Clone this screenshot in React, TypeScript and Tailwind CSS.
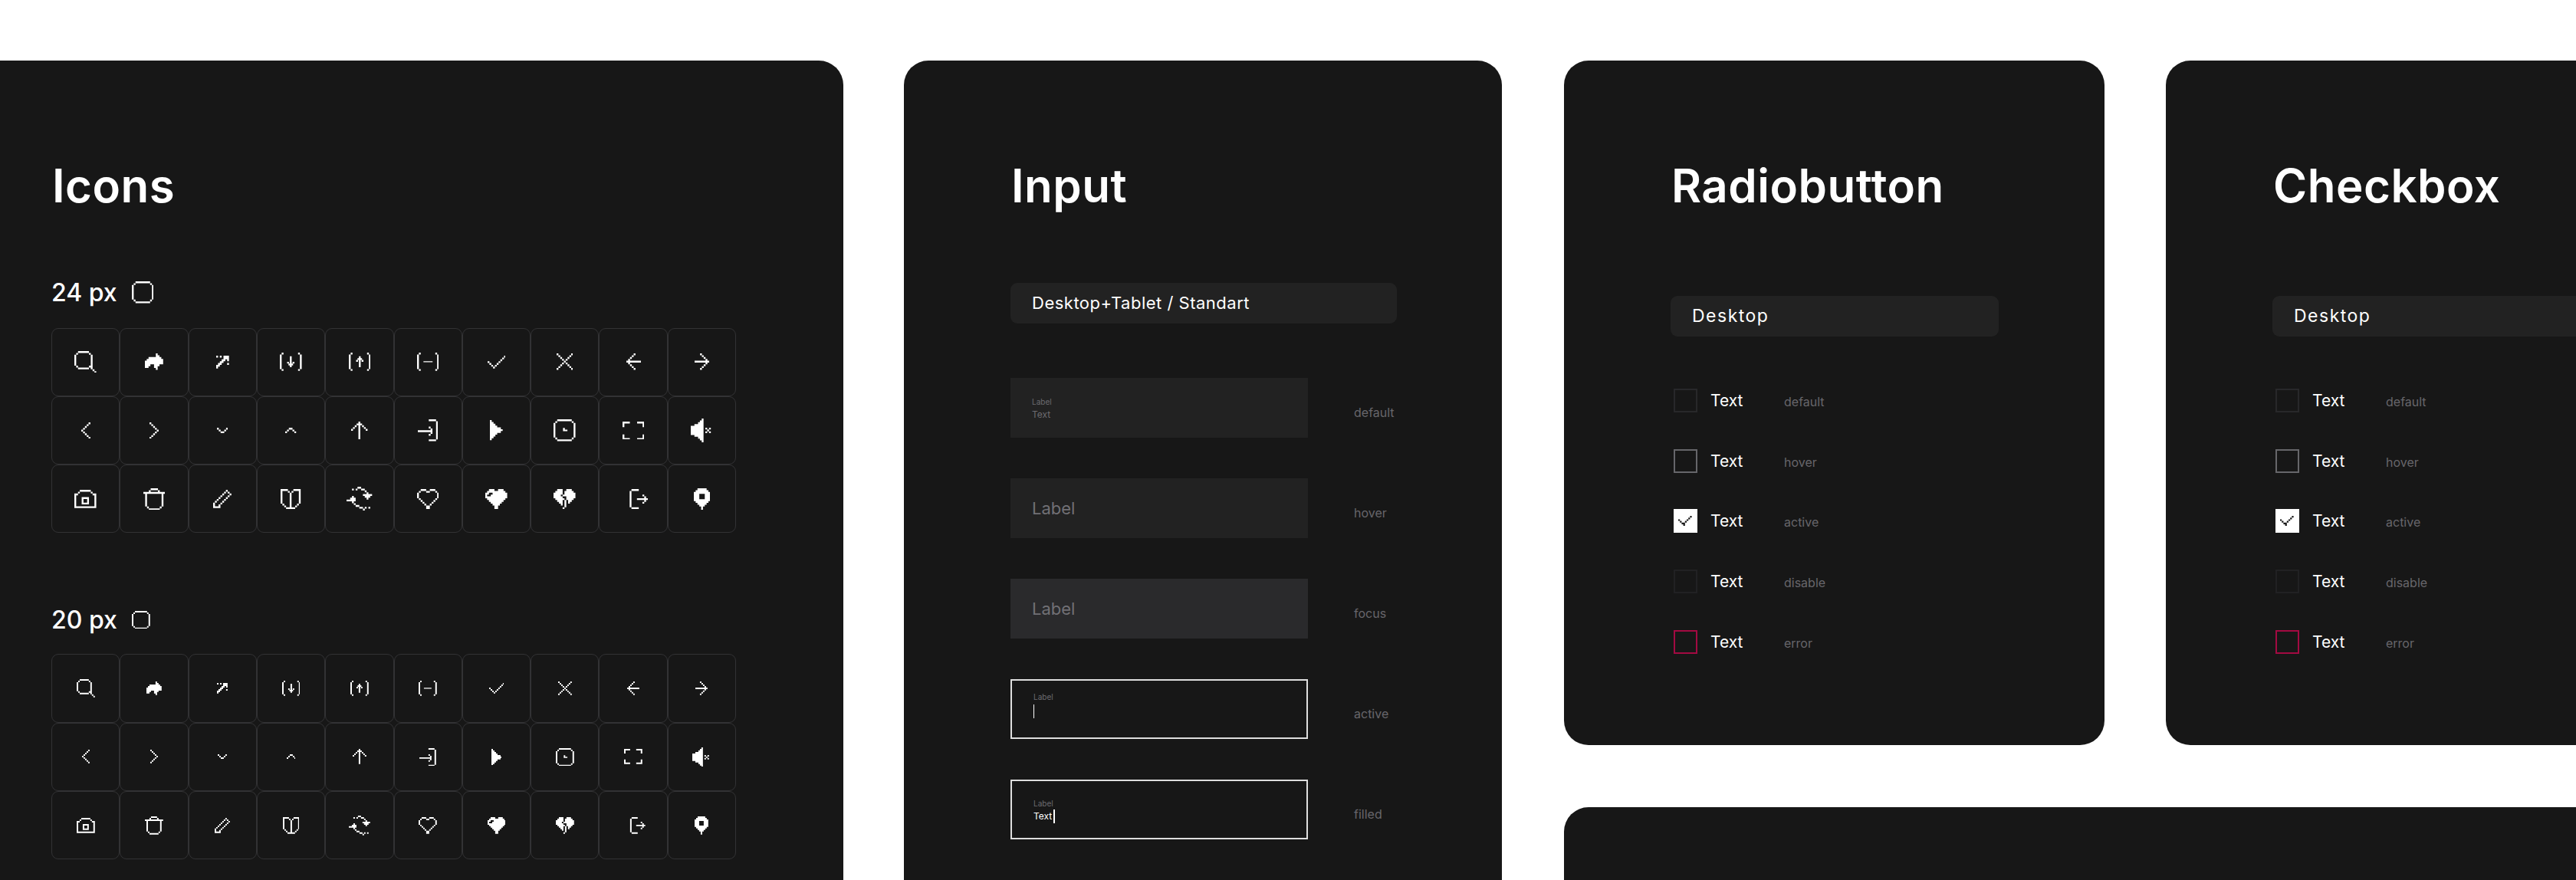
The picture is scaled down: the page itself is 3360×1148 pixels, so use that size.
import React from "react";

type Icon = { r: string[]; x?: string };

const brackets = [
  ".#........#.",
  "#..........#",
  "#..........#",
  "#..........#",
  "#..........#",
  "#..........#",
  "#..........#",
  "#..........#",
  "#..........#",
  ".#........#.",
];

const mirror = (rows: string[]) => rows.map((s) => s.split("").reverse().join(""));

const leftArrow = ["....#...", "...#....", "..#.....", ".#......", "########", ".#......", "..#.....", "...#....", "....#..."];
const leftChev = ["....#", "...#.", "..#..", ".#...", "#....", ".#...", "..#..", "...#.", "....#"];
const ring = [
  "..########..",
  ".#........#.",
  "#..........#",
  "#..........#",
  "#..........#",
  "#..........#",
  "#..........#",
  "#..........#",
  "#..........#",
  "#..........#",
  ".#........#.",
  "..########..",
];
const checkRows = [".........#", "........#.", ".......#..", "#.....#...", ".#...#....", "..#.#.....", "...#......"];

const icons: Icon[] = [
  {
    r: [
      "..######....",
      ".#......#...",
      "#........#..",
      "#........#..",
      "#........#..",
      "#........#..",
      "#........#..",
      "#........#..",
      ".#......##..",
      "..######.#..",
      "..........#.",
      "...........#",
    ],
  },
  {
    r: ["......#...", "......##..", "..#######.", ".#########", "##########", "##########", "###..###..", "##...##...", "......#..."],
  },
  { r: ["#.#.###", "....###", "...##.#", "..##...", ".##...#", "##.....", "#......"] },
  { r: brackets, x: "M5.5 2h1v6h-1zM4 5h1v1h-1zM7 5h1v1h-1zM4.75 6h1v1h-1zM6.25 6h1v1h-1z" },
  { r: brackets, x: "M5.5 2h1v6h-1zM4 4h1v1h-1zM7 4h1v1h-1zM4.75 3h1v1h-1zM6.25 3h1v1h-1z" },
  { r: brackets, x: "M3.5 4.7h5v.6h-5z" },
  { r: checkRows },
  {
    r: ["#.......#", ".#.....#.", "..#...#..", "...#.#...", "....#....", "...#.#...", "..#...#..", ".#.....#.", "#.......#"],
  },
  { r: leftArrow },
  { r: mirror(leftArrow) },
  { r: leftChev },
  { r: mirror(leftChev) },
  { r: ["#....#", ".#..#.", "..##.."] },
  { r: ["..##..", ".#..#.", "#....#"] },
  {
    r: ["....#....", "...###...", "..#.#.#..", ".#..#..#.", "#...#...#", "....#....", "....#....", "....#....", "....#....", "....#...."],
  },
  {
    r: [
      "......####.",
      "..........#",
      "..........#",
      "..........#",
      "......#...#",
      ".......#..#",
      "########..#",
      ".......#..#",
      "......#...#",
      "..........#",
      "..........#",
      "......####.",
    ],
  },
  {
    r: ["#......", "##.....", "###....", "####...", "######.", "#######", "######.", "####...", "###....", "##.....", "#......"],
  },
  { r: ring, x: "M5.2 4.7h1v1.2h-1zM5.2 5.7h2.4v.8h-2.4z" },
  {
    r: ["####....####", "#..........#", "#..........#", "............", "............", "............", "............", "#..........#", "#..........#", "####....####"],
  },
  {
    r: [
      "......#.....",
      ".....##.....",
      "....###.....",
      "..#####.....",
      "#######.....",
      "#######.#.#.",
      "#######..#..",
      "#######.#.#.",
      "#######.....",
      "..#####.....",
      "....###.....",
      ".....##.....",
      "......#.....",
    ],
  },
  {
    r: ["...######...", "..#......#..", "##........##", "#..........#", "#...####...#", "#...#..#...#", "#...#..#...#", "#...####...#", "#..........#", "############"],
  },
  {
    r: [
      "....####....",
      "...#....#...",
      "############",
      ".#........#.",
      ".#........#.",
      ".#........#.",
      ".#........#.",
      ".#........#.",
      ".#........#.",
      ".#........#.",
      "..#......#..",
      "...######...",
    ],
  },
  {
    r: [".......#..", "......#.#.", ".....#...#", "....#...#.", "...#...#..", "..#...#...", ".#...#....", "#...#.....", "#..#......", "####......"],
  },
  {
    r: [
      "####...####",
      "#...#.#...#",
      "#....#....#",
      "#....#....#",
      "#....#....#",
      "#....#....#",
      "#....#....#",
      "#....#....#",
      ".#...#...#.",
      "..#..#..#..",
      "...#####...",
    ],
  },
  {
    r: [
      "......##......",
      "...#.#..##....",
      "..........#...",
      "...........#..",
      ".........#####",
      "...#......###.",
      "..###......#..",
      "#####.........",
      "...#..........",
      "....#.........",
      ".....##.......",
      ".......##.#.#.",
      ".........#....",
    ],
  },
  {
    r: [
      "..###..###..",
      ".#...##...#.",
      "#..........#",
      "#..........#",
      "#..........#",
      ".#........#.",
      "..#......#..",
      "...#....#...",
      "....#..#....",
      ".....##.....",
      ".....##.....",
    ],
  },
  {
    r: [
      "..###..###..",
      ".##########.",
      "##..########",
      "#..#########",
      "############",
      ".##########.",
      "..########..",
      "...######...",
      "....####....",
      ".....##.....",
      ".....##.....",
    ],
  },
  {
    r: [
      "..###..###..",
      ".####.#####.",
      "#####.######",
      "####.#######",
      "#####..#####",
      ".#####.####.",
      "..###.#.##..",
      "...##.#.#...",
      "....#.#.....",
      "......#.....",
      ".....#......",
    ],
  },
  {
    r: [
      ".####.....",
      "#.........",
      "#.........",
      "#......#..",
      "#.......#.",
      "#...######",
      "#.......#.",
      "#......#..",
      "#.........",
      "#.........",
      ".####.....",
    ].map((s) => "......" + s),
  },
  {
    r: [
      "..#####..",
      ".#######.",
      "#########",
      "###...###",
      "###...###",
      "###...###",
      "#########",
      ".#######.",
      "..#####..",
      "...###...",
      "....#....",
      "....#....",
    ],
  },
];

function toPath(rows: string[]) {
  let d = "";
  rows.forEach((row, y) => {
    let x = 0;
    while (x < row.length) {
      if (row[x] === "#") {
        let e = x;
        while (row[e] === "#") e++;
        d += `M${x} ${y}h${e - x}v1h-${e - x}z`;
        x = e;
      } else x++;
    }
  });
  return d;
}

function Px({ icon, u }: { icon: Icon; u: number }) {
  const w = Math.max(...icon.r.map((s) => s.length));
  const h = icon.r.length;
  return (
    <svg width={w * u} height={h * u} viewBox={`0 0 ${w} ${h}`} fill="currentColor">
      <path d={toPath(icon.r) + (icon.x ?? "")} />
    </svg>
  );
}

function IconGrid({ u }: { u: number }) {
  return (
    <div className="grid w-[893px] grid-cols-10 text-white">
      {icons.map((ic, i) => (
        <div key={i} className="flex h-[89.3px] items-center justify-center rounded-[9px] border border-[#323234]">
          <Px icon={ic} u={u} />
        </div>
      ))}
    </div>
  );
}

function Title({ children }: { children: React.ReactNode }) {
  return <h2 className="h-[70px] pl-[1px] text-[60px] leading-[70px] font-semibold tracking-[0.5px] text-white">{children}</h2>;
}

function Tab({ children, w, mt, text }: { children: React.ReactNode; w: string; mt: string; text: string }) {
  return (
    <div className={`flex h-[53px] items-center rounded-[9px] bg-[#222222] pl-[28px] text-white ${text} ${w} ${mt}`}>
      {children}
    </div>
  );
}

function Status({ children }: { children: React.ReactNode }) {
  return <span className="text-[16px] leading-[20px] text-[#67666b]">{children}</span>;
}

function InputRow({ status, children, box }: { status: string; children: React.ReactNode; box: string }) {
  return (
    <div className="flex items-start">
      <div className={`h-[78px] w-[388px] pl-[28px] ${box}`}>{children}</div>
      <div className="ml-[60px] pt-[33px]">
        <Status>{status}</Status>
      </div>
    </div>
  );
}

const smallLabel = "block text-[10px] leading-[12px] text-[#6c6b70]";

function InputCard() {
  return (
    <section className="ml-[79px] h-[1200px] w-[780px] shrink-0 rounded-[32px] bg-[#171717] pt-[128px] pl-[139px]">
      <Title>Input</Title>
      <Tab w="w-[504px]" mt="mt-[92px]" text="text-[22px] tracking-[0.5px]">
        Desktop+Tablet / Standart
      </Tab>
      <div className="mt-[71px] flex flex-col gap-[53px]">
        <InputRow status="default" box="bg-[#222222] pt-[25px]">
          <span className={smallLabel}>Label</span>
          <span className="mt-[3px] block text-[12px] leading-[16px] text-[#6c6b70]">Text</span>
        </InputRow>
        <InputRow status="hover" box="flex items-center bg-[#222222]">
          <span className="text-[22px] text-[#717075]">Label</span>
        </InputRow>
        <InputRow status="focus" box="flex items-center bg-[#2a2a2c]">
          <span className="text-[22px] text-[#717075]">Label</span>
        </InputRow>
        <InputRow status="active" box="border-2 border-[#dedede] pt-[15px] pl-[26px]">
          <span className={smallLabel}>Label</span>
          <span className="mt-[4px] block h-[18px] w-[1px] bg-white" />
        </InputRow>
        <InputRow status="filled" box="border-2 border-[#dedede] pt-[23px] pl-[26px]">
          <span className={smallLabel}>Label</span>
          <span className="mt-[2px] flex h-[18px] items-center gap-[2px] text-[12px] text-white">
            Text
            <span className="block h-[18px] w-[2px] bg-white" />
          </span>
        </InputRow>
      </div>
    </section>
  );
}

const checkIcon: Icon = { r: [".......#.", "......#..", "#....#...", ".#..#....", "..##.....", "...#....."] };

function ChoiceRow({ status, box, checked }: { status: string; box: string; checked?: boolean }) {
  return (
    <div className="flex h-[31px] items-center">
      <div className={`ml-[4px] flex h-[31px] w-[31px] items-center justify-center text-[#171717] ${box}`}>
        {checked && <Px icon={checkIcon} u={2.2} />}
      </div>
      <span className="ml-[17px] w-[96px] text-[21px] leading-[31px] text-white">Text</span>
      <span className="pt-[3px]">
        <Status>{status}</Status>
      </span>
    </div>
  );
}

function ChoiceCard({ title }: { title: string }) {
  return (
    <section className="h-[893px] w-[705px] shrink-0 rounded-[32px] bg-[#171717] pt-[128px] pl-[139px]">
      <Title>{title}</Title>
      <Tab w="w-[428px]" mt="mt-[109px]" text="text-[23px] tracking-[1.5px]">
        Desktop
      </Tab>
      <div className="mt-[68px] flex flex-col gap-[47.7px]">
        <ChoiceRow status="default" box="border-2 border-[#28282a]" />
        <ChoiceRow status="hover" box="border-2 border-[#66666a]" />
        <ChoiceRow status="active" box="bg-white" checked />
        <ChoiceRow status="disable" box="border-2 border-[#212123]" />
        <ChoiceRow status="error" box="border-2 border-[#a30a42]" />
      </div>
    </section>
  );
}

const ringIcon: Icon = { r: ring };

function SizeHead({ label, u }: { label: string; u: number }) {
  return (
    <div className="flex items-center gap-[19px] text-white">
      <span className="pt-[2px] text-[32px] leading-[24px] font-medium">{label}</span>
      <Px icon={ringIcon} u={u} />
    </div>
  );
}

export default function App() {
  return (
    <div className="flex h-[1148px] w-[3360px] items-start overflow-hidden bg-white pt-[79px] font-['Inter',sans-serif]">
      <section className="h-[1200px] w-[1100px] shrink-0 rounded-r-[32px] bg-[#171717] pt-[128px] pl-[67px]">
        <Title>Icons</Title>
        <div className="mt-[90px]">
          <SizeHead label="24 px" u={2.38} />
        </div>
        <div className="mt-[32px]">
          <IconGrid u={2.38} />
        </div>
        <div className="mt-[100px]">
          <SizeHead label="20 px" u={1.98} />
        </div>
        <div className="mt-[32px]">
          <IconGrid u={1.98} />
        </div>
      </section>
      <InputCard />
      <div className="ml-[81px] flex shrink-0 flex-col gap-[81px]">
        <div className="flex gap-[80px]">
          <ChoiceCard title="Radiobutton" />
          <ChoiceCard title="Checkbox" />
        </div>
        <section className="h-[400px] w-[1500px] rounded-l-[32px] bg-[#171717]" />
      </div>
    </div>
  );
}
